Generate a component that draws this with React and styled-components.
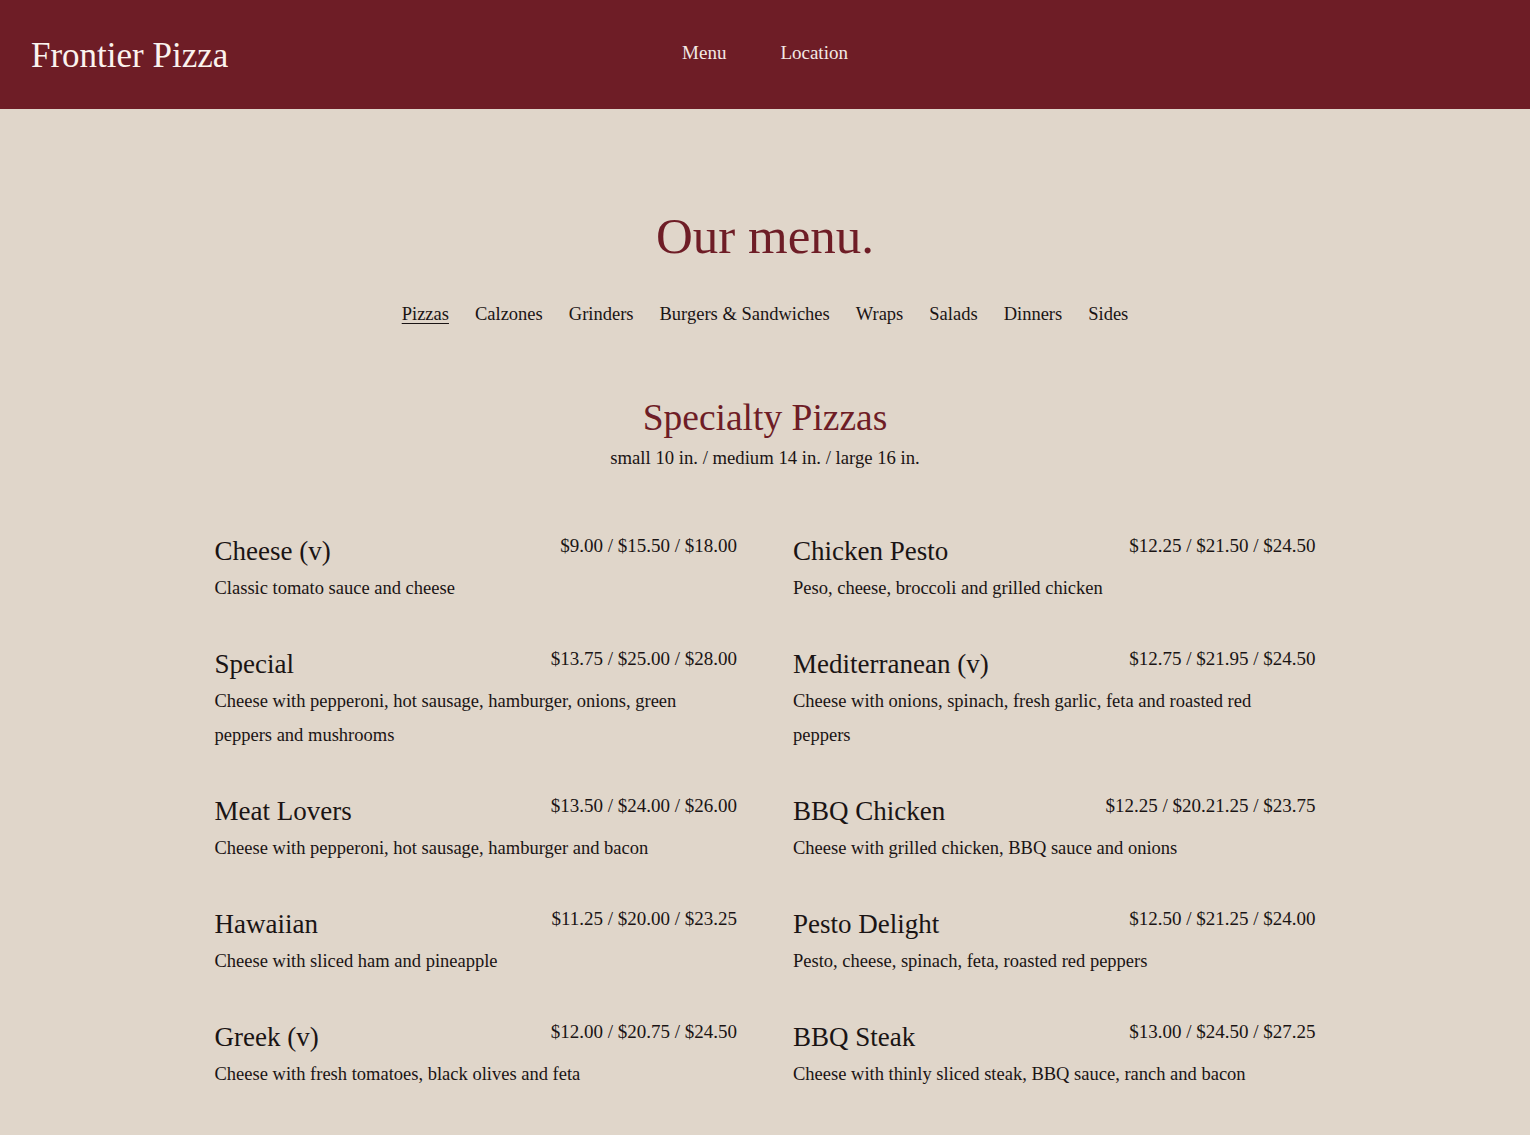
import React from 'react';
import styled, { createGlobalStyle } from 'styled-components';

const GlobalStyle = createGlobalStyle`
  body {
    margin: 0;
    background: #e0d6ca;
    font-family: "Liberation Serif", "Times New Roman", serif;
    color: #1a1414;
  }
`;

const Header = styled.header`
  height: 109px;
  background: #6e1d26;
  display: grid;
  grid-template-columns: 1fr auto 1fr;
  align-items: center;
  padding: 0 31px;
  box-sizing: border-box;
`;

const Logo = styled.div`
  font-size: 35px;
  color: #fbf3ee;
  padding-top: 2px;
`;

const NavLinks = styled.nav`
  display: flex;
  gap: 54px;
  padding-bottom: 4px;
`;

const NavLink = styled.a`
  color: #f3e9e4;
  font-size: 19px;
  text-decoration: none;
`;

const Main = styled.main`
  width: 1101px;
  margin: 0 auto;
  padding: 96px 0 40px;
`;

const Title = styled.h1`
  margin: 0;
  text-align: center;
  font-size: 51px;
  font-weight: 400;
  color: #6e1d26;
  line-height: 62px;
`;

const Tabs = styled.div`
  display: flex;
  justify-content: center;
  gap: 26px;
  margin-top: 37px;
`;

const Tab = styled.a`
  font-size: 18.5px;
  color: #1a1414;
  text-decoration: ${p => (p.$active ? 'underline' : 'none')};
  text-underline-offset: 3px;
  text-decoration-thickness: 1px;
`;

const Section = styled.section`
  margin-top: 71px;
`;

const SectionTitle = styled.h2`
  margin: 0;
  text-align: center;
  font-size: 37.5px;
  font-weight: 400;
  color: #6e1d26;
  line-height: 44px;
`;

const Sizes = styled.p`
  margin: 3px 0 0;
  text-align: center;
  font-size: 18.7px;
  line-height: 30px;
`;

const Grid = styled.div`
  display: grid;
  grid-template-columns: 1fr 1fr;
  column-gap: 56px;
  margin-top: 60px;
`;

const Item = styled.div`
  padding-bottom: 41px;
`;

const ItemHead = styled.div`
  display: flex;
  justify-content: space-between;
  align-items: flex-start;
`;

const ItemName = styled.h3`
  margin: 0;
  font-size: 27px;
  font-weight: 400;
  line-height: 36px;
`;

const Price = styled.span`
  font-size: 19px;
  line-height: 26px;
`;

const Desc = styled.p`
  margin: 2px 0 0;
  font-size: 18.5px;
  line-height: 34px;
  max-width: 90%;
`;

const navItems = ['Menu', 'Location'];
const tabs = ['Pizzas', 'Calzones', 'Grinders', 'Burgers & Sandwiches', 'Wraps', 'Salads', 'Dinners', 'Sides'];

const pizzas = [
  ['Cheese (v)', '$9.00 / $15.50 / $18.00', 'Classic tomato sauce and cheese'],
  ['Chicken Pesto', '$12.25 / $21.50 / $24.50', 'Peso, cheese, broccoli and grilled chicken'],
  ['Special', '$13.75 / $25.00 / $28.00', 'Cheese with pepperoni, hot sausage, hamburger, onions, green peppers and mushrooms'],
  ['Mediterranean (v)', '$12.75 / $21.95 / $24.50', 'Cheese with onions, spinach, fresh garlic, feta and roasted red peppers'],
  ['Meat Lovers', '$13.50 / $24.00 / $26.00', 'Cheese with pepperoni, hot sausage, hamburger and bacon'],
  ['BBQ Chicken', '$12.25 / $20.21.25 / $23.75', 'Cheese with grilled chicken, BBQ sauce and onions'],
  ['Hawaiian', '$11.25 / $20.00 / $23.25', 'Cheese with sliced ham and pineapple'],
  ['Pesto Delight', '$12.50 / $21.25 / $24.00', 'Pesto, cheese, spinach, feta, roasted red peppers'],
  ['Greek (v)', '$12.00 / $20.75 / $24.50', 'Cheese with fresh tomatoes, black olives and feta'],
  ['BBQ Steak', '$13.00 / $24.50 / $27.25', 'Cheese with thinly sliced steak, BBQ sauce, ranch and bacon'],
  ['Veggie (v)', '$12.00 / $20.75 / $24.50', 'Cheese with onions, peppers, mushrooms and tomatoes'],
  ['Buffalo Chicken', '$12.50 / $21.25 / $24.00', 'Cheese with buffalo chicken, ranch and hot sauce'],
];

export default function App() {
  return (
    <>
      <GlobalStyle />
      <Header>
        <Logo>Frontier Pizza</Logo>
        <NavLinks>
          {navItems.map(n => (
            <NavLink key={n} href="#">{n}</NavLink>
          ))}
        </NavLinks>
        <div />
      </Header>
      <Main>
        <Title>Our menu.</Title>
        <Tabs>
          {tabs.map((t, i) => (
            <Tab key={t} href="#" $active={i === 0}>{t}</Tab>
          ))}
        </Tabs>
        <Section>
          <SectionTitle>Specialty Pizzas</SectionTitle>
          <Sizes>small 10 in. / medium 14 in. / large 16 in.</Sizes>
          <Grid>
            {pizzas.map(([name, price, desc]) => (
              <Item key={name}>
                <ItemHead>
                  <ItemName>{name}</ItemName>
                  <Price>{price}</Price>
                </ItemHead>
                <Desc>{desc}</Desc>
              </Item>
            ))}
          </Grid>
        </Section>
      </Main>
    </>
  );
}
